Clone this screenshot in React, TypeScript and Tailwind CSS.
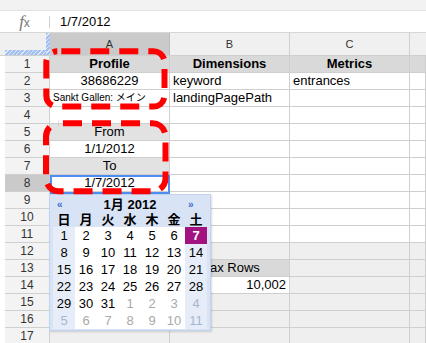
import React from "react";
import { clsx } from "clsx";

type Cell = { t?: React.ReactNode; cls?: string; size?: string };
type RowDef = { n: number; a?: Cell; b?: Cell; c?: Cell; d?: Cell; sel?: boolean };

const GRAY = "bg-[#efefef]";
const HEAD = "bg-[#d9d9d9]";

const rows: RowDef[] = [
  {
    n: 1,
    a: { t: "Profile", cls: clsx(HEAD, "justify-center font-bold") },
    b: { t: "Dimensions", cls: clsx(HEAD, "justify-center font-bold") },
    c: { t: "Metrics", cls: clsx(HEAD, "justify-center font-bold") },
    d: { cls: HEAD },
  },
  {
    n: 2,
    a: { t: "38686229", cls: "justify-center" },
    b: { t: "keyword" },
    c: { t: "entrances" },
  },
  {
    n: 3,
    a: { t: "Sankt Gallen: メイン", size: "text-[10px]" },
    b: { t: "landingPagePath" },
  },
  { n: 4 },
  { n: 5, a: { t: "From", cls: "justify-center bg-[#e2e2e2]" } },
  { n: 6, a: { t: "1/1/2012", cls: "justify-center" } },
  { n: 7, a: { t: "To", cls: "justify-center bg-[#e2e2e2]" } },
  { n: 8, a: { t: "1/7/2012", cls: "justify-center" }, sel: true },
  { n: 9 },
  { n: 10 },
  { n: 11 },
  { n: 12, a: { cls: GRAY }, b: { cls: GRAY }, c: { cls: GRAY }, d: { cls: GRAY } },
  {
    n: 13,
    a: { cls: GRAY },
    b: { t: "Max Rows", cls: clsx(HEAD, "justify-center") },
    c: { cls: GRAY },
    d: { cls: GRAY },
  },
  {
    n: 14,
    a: { cls: GRAY },
    b: { t: "10,002", cls: "justify-end" },
    c: { cls: GRAY },
    d: { cls: GRAY },
  },
  { n: 15, a: { cls: GRAY }, b: { cls: GRAY }, c: { cls: GRAY }, d: { cls: GRAY } },
  { n: 16, a: { cls: GRAY }, b: { cls: GRAY }, c: { cls: GRAY }, d: { cls: GRAY } },
  { n: 17, a: { cls: GRAY }, b: { cls: GRAY }, c: { cls: GRAY }, d: { cls: GRAY } },
];

const cellBase =
  "h-[17px] flex items-center px-[3px] border-b border-r border-[#cfcfcf] leading-[16px] whitespace-nowrap overflow-hidden text-black";

function SheetCell({ cell, w }: { cell?: Cell; w: string }) {
  return (
    <div className={clsx(cellBase, w, cell?.size ?? "text-[13px]", cell?.cls)}>{cell?.t}</div>
  );
}

function SheetRow({ row }: { row: RowDef }) {
  return (
    <div className="flex">
      <div className="w-[5px] h-[17px] bg-white" />
      <div
        className={clsx(
          "w-[45px] h-[17px] flex items-center justify-center border-b border-r border-[#cfcfcf] text-[12px] text-[#333]",
          row.sel ? "bg-[#cacaca]" : "bg-[#f3f3f3]",
        )}
      >
        {row.n}
      </div>
      <SheetCell cell={row.a} w="w-[120px]" />
      <SheetCell cell={row.b} w="w-[120px]" />
      <SheetCell cell={row.c} w="w-[120px]" />
      <SheetCell cell={row.d} w="flex-1" />
    </div>
  );
}

const weeks = [
  [1, 2, 3, 4, 5, 6, 7],
  [8, 9, 10, 11, 12, 13, 14],
  [15, 16, 17, 18, 19, 20, 21],
  [22, 23, 24, 25, 26, 27, 28],
  [29, 30, 31, 1, 2, 3, 4],
  [5, 6, 7, 8, 9, 10, 11],
];

function Calendar() {
  const days = ["日", "月", "火", "水", "木", "金", "土"];
  return (
    <div className="absolute left-[49px] top-[194px] w-[162px] h-[137px] bg-[#d8e4f6] border border-[#c2d3ee] px-[3px] shadow-[1px_1px_2px_rgba(0,0,0,0.15)]">
      <div className="grid grid-cols-7 h-[17px] items-center">
        <span className="pl-[4px] text-[10px] font-bold text-[#3a6fd0]">«</span>
        <span className="col-span-5 text-center text-[13px] font-bold">1月 2012</span>
        <span className="pl-[3px] text-[10px] font-bold text-[#3a6fd0]">»</span>
      </div>
      <div className="grid grid-cols-7 h-[15px] items-center">
        {days.map((d) => (
          <span key={d} className="text-center text-[13px] leading-[15px] font-bold">
            {d}
          </span>
        ))}
      </div>
      <div className="grid grid-cols-7">
        {weeks.map((w, wi) =>
          w.map((d, di) => {
            const other = (wi === 4 && di >= 3) || wi === 5;
            const weekend = di === 0 || di === 6;
            const sel = wi === 0 && di === 6;
            return (
              <div
                key={`${wi}-${di}`}
                className={clsx(
                  "h-[17px] flex items-center justify-center text-[13px]",
                  sel
                    ? "bg-[#a3137f] text-white font-bold"
                    : weekend
                      ? "bg-[#e6edf8]"
                      : "bg-white",
                  !sel && (other ? (weekend ? "text-[#a4b6d2]" : "text-[#a9a9a9]") : "text-black"),
                )}
              >
                {d}
              </div>
            );
          }),
        )}
      </div>
    </div>
  );
}

function Marks() {
  return (
    <svg className="absolute left-0 top-0 pointer-events-none" width="426" height="343">
      <rect
        x="46.3"
        y="51.3"
        width="118.2"
        height="55.2"
        rx="11"
        fill="none"
        stroke="#ff0000"
        strokeWidth="6"
        strokeDasharray="19 10"
        strokeDashoffset="-4"
      />
      <rect
        x="46"
        y="123.3"
        width="119.5"
        height="68"
        rx="13"
        fill="none"
        stroke="#ff0000"
        strokeWidth="6"
        strokeDasharray="19 10"
        strokeDashoffset="-4"
      />
    </svg>
  );
}

export default function App() {
  return (
    <div className="relative w-[426px] h-[343px] overflow-hidden bg-white font-['Liberation_Sans','Noto_Sans_CJK_JP',sans-serif]">
      {/* top strip */}
      <div className="h-[11px] bg-[#f2f2f2] border-b border-[#e2e2e2]" />

      {/* formula bar */}
      <div className="h-[22px] flex items-center border-b border-[#d6d6d6] bg-white">
        <div className="w-[49px] flex items-center justify-center text-[#777]">
          <span className="italic text-[17px] font-['Liberation_Serif',serif] leading-none">f</span>
          <span className="text-[12px] leading-none mt-[3px]">x</span>
        </div>
        <div className="w-px h-[12px] bg-[#d0d0d0]" />
        <span className="ml-[10px] text-[13px] text-black">1/7/2012</span>
      </div>

      {/* column headers */}
      <div className="flex h-[23px] border-b border-[#cfcfcf]">
        <div className="w-[50px] flex bg-[#f0f0f0]">
          <div className="flex-1 flex flex-col justify-end">
            <div className="h-[5px] ml-[5px] bg-[repeating-linear-gradient(135deg,#a2c0f2_0px,#a2c0f2_2px,#dfe9fb_2px,#dfe9fb_3px)]" />
          </div>
          <div className="w-[4px] bg-[repeating-linear-gradient(135deg,#a2c0f2_0px,#a2c0f2_2px,#dfe9fb_2px,#dfe9fb_3px)]" />
        </div>
        <div className="w-[120px] flex items-center justify-center bg-[#cacaca] border-r border-[#bdbdbd] text-[11px] text-[#333]">
          A
        </div>
        <div className="w-[120px] flex items-center justify-center bg-[#f0f0f0] border-r border-[#cfcfcf] text-[11px] text-[#333]">
          B
        </div>
        <div className="w-[120px] flex items-center justify-center bg-[#f0f0f0] border-r border-[#cfcfcf] text-[11px] text-[#333]">
          C
        </div>
        <div className="flex-1 bg-[#f0f0f0]" />
      </div>

      {/* rows */}
      <div>
        {rows.map((r) => (
          <SheetRow key={r.n} row={r} />
        ))}
      </div>

      {/* selected cell */}
      <div className="absolute left-[50px] top-[175px] w-[120px] h-[19px] border-2 border-[#4d8ef0]" />

      <Calendar />
      <Marks />
    </div>
  );
}
